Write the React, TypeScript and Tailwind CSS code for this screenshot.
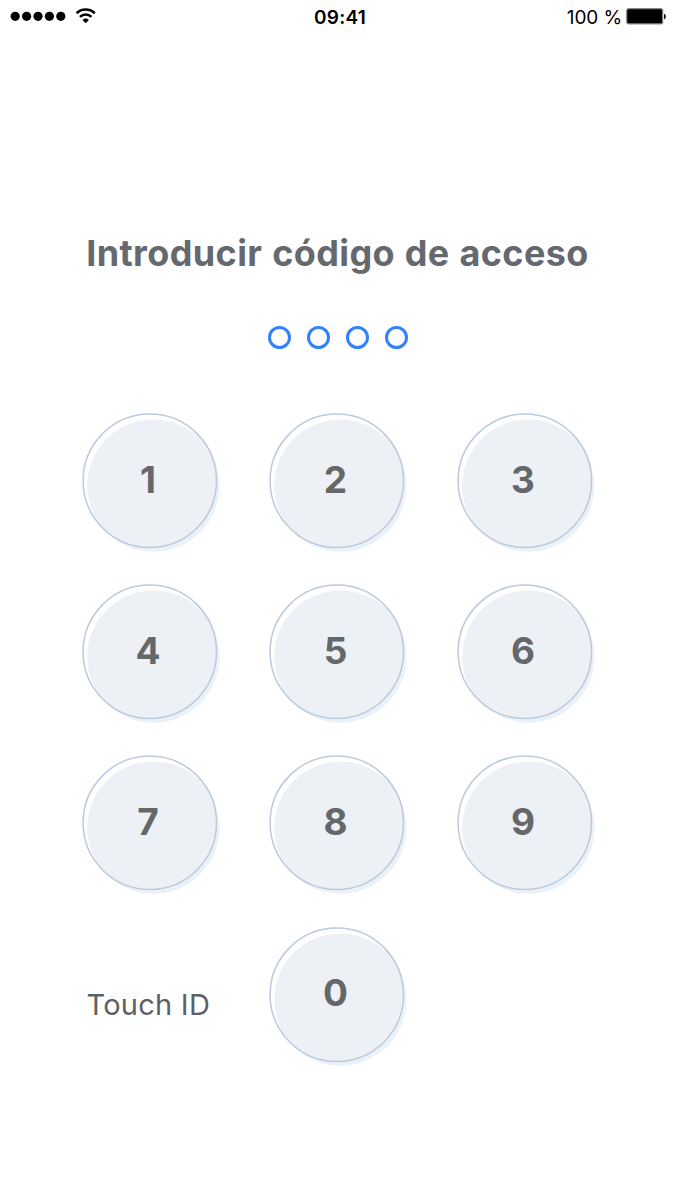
import { useId } from "react";

interface KeyProps {
  digit: string;
}

const KEYS = ["1", "2", "3", "4", "5", "6", "7", "8", "9"];

function StatusBar() {
  return (
    <header className="grid h-8 grid-cols-3 items-center pl-[10px] pr-[8px] text-black">
      <div className="flex items-center">
        <svg className="h-8 w-[90px]" viewBox="10 0 90 32" fill="none">
          {[15.2, 26.6, 38, 49.4, 60.8].map((cx) => (
            <circle key={cx} cx={cx} cy="16.3" r="4.6" fill="#000" />
          ))}
          <path d="M76.6 13.2a13 13 0 0 1 18.2 0" stroke="#000" strokeWidth="2.6" />
          <path d="M80 16.9a8 8 0 0 1 11.4 0" stroke="#000" strokeWidth="2.6" />
          <path d="M82.5 19.9a4.8 4.8 0 0 1 6.4 0L85.7 23.2z" fill="#000" />
        </svg>
      </div>
      <time className="ml-[3px] mt-[3px] text-center text-[19px] font-semibold leading-6 tracking-[0.2px]">
        09:41
      </time>
      <div className="flex items-center justify-end gap-[4px]">
        <span className="mt-[3px] text-[19px] leading-6 tracking-[-0.1px]">100 %</span>
        <svg className="h-[18px] w-[41px]" viewBox="0 0 41 18">
          <rect x="0.7" y="1.7" width="36" height="15.2" rx="2" fill="#000" stroke="#8a8a8a" strokeWidth="1.2" />
          <path d="M38 6.7c2.4.6 2.4 5 0 5.6z" fill="#000" />
        </svg>
      </div>
    </header>
  );
}

function Key({ digit }: KeyProps) {
  const clipId = useId();

  return (
    <button className="relative size-[135px] rounded-full">
      {/* raised face, shifted down and right of its outline */}
      <svg
        className="absolute left-0 top-0 size-[140px] overflow-visible"
        viewBox="0 0 140 140"
        fill="none"
      >
        <clipPath id={clipId}>
          <circle cx="66.8" cy="67.8" r="66.7" />
        </clipPath>
        <circle cx="70.4" cy="72.7" r="66" fill="#ebf1f8" />
        <circle cx="70.4" cy="72.7" r="66" fill="#edf1f6" clipPath={`url(#${clipId})`} />
        <circle cx="66.8" cy="67.8" r="66.7" stroke="#bccadc" strokeWidth="1.5" />
      </svg>
      <span className="relative -left-[2px] -top-px text-[37px] font-bold text-[#65686b]">
        {digit}
      </span>
    </button>
  );
}

export default function App() {
  return (
    <div className="h-[1200px] w-[675px] overflow-hidden bg-white font-['Inter',sans-serif]">
      <StatusBar />
      <main className="flex flex-col items-center pt-[197px]">
        <h1 className="whitespace-nowrap text-[36px] font-bold leading-[48px] tracking-[0.38px] [word-spacing:0.9px] text-[#65696f]">
          Introducir código de acceso
        </h1>
        <div className="mt-[49px] flex gap-[16px]">
          {[0, 1, 2, 3].map((i) => (
            <span key={i} className="size-[23px] rounded-full border-[3px] border-[#3380ff]" />
          ))}
        </div>
        <div className="mt-[64px] grid grid-cols-[repeat(3,135px)] gap-x-[52.5px] gap-y-[36.2px]">
          {KEYS.map((digit) => (
            <Key key={digit} digit={digit} />
          ))}
          <button className="mt-[21px] whitespace-nowrap pl-[4px] text-left text-[29px] tracking-[0.25px] text-[#5c6066]">
            Touch ID
          </button>
          <Key digit="0" />
        </div>
      </main>
    </div>
  );
}
